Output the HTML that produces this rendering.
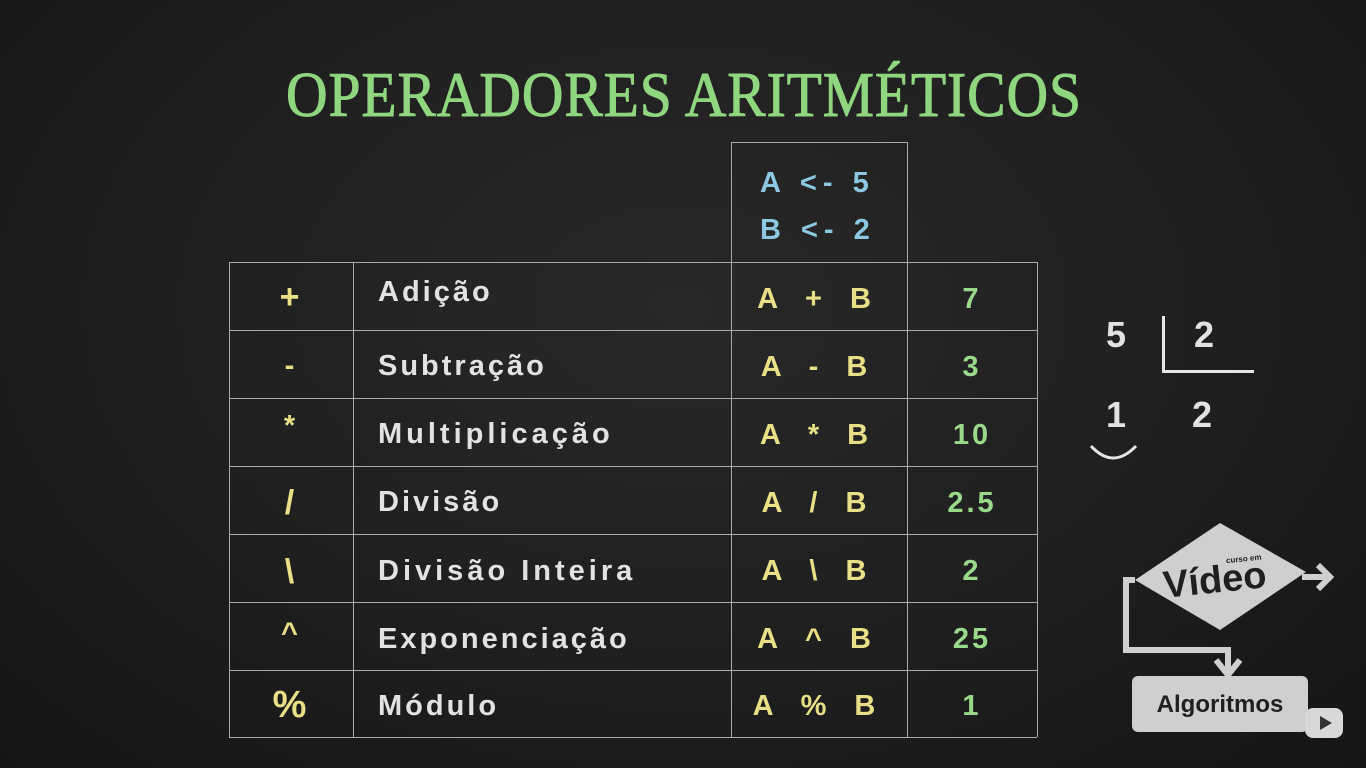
<!DOCTYPE html>
<html><head><meta charset="utf-8"><style>
body{margin:0;width:1366px;height:768px;overflow:hidden;background:radial-gradient(ellipse at 50% 40%,#272827 0%,#1e1f1e 55%,#141514 100%);font-family:"Liberation Sans","DejaVu Sans",sans-serif;position:relative}
.a{position:absolute}
.l{position:absolute;background:#a9a9a9}
.t{position:absolute;font-size:29px;font-weight:bold;letter-spacing:3px;white-space:nowrap}
.w{color:#e2e2e2}.y{color:#e8df86}.b{color:#8cc8e2}.g{color:#9ad98a}
.c{text-align:center}
</style></head><body>
<div class="a" style="left:286px;top:58px;font-family:'Liberation Serif',serif;font-size:64px;color:#8fd67f;letter-spacing:1px;transform:scaleX(0.9);transform-origin:left;white-space:nowrap;-webkit-text-stroke:1px #8fd67f">OPERADORES ARITMÉTICOS</div>
<div class="l" style="left:731px;top:142px;width:176px;height:1px"></div>
<div class="l" style="left:731px;top:142px;width:1px;height:595px"></div>
<div class="l" style="left:907px;top:142px;width:1px;height:595px"></div>
<div class="t b" style="left:760px;top:167px;letter-spacing:6px">A &lt;- 5</div>
<div class="t b" style="left:760px;top:214px;letter-spacing:6px">B &lt;- 2</div>
<div class="l" style="left:229px;top:262px;width:808px;height:1px"></div>
<div class="l" style="left:229px;top:330px;width:808px;height:1px"></div>
<div class="l" style="left:229px;top:398px;width:808px;height:1px"></div>
<div class="l" style="left:229px;top:466px;width:808px;height:1px"></div>
<div class="l" style="left:229px;top:534px;width:808px;height:1px"></div>
<div class="l" style="left:229px;top:602px;width:808px;height:1px"></div>
<div class="l" style="left:229px;top:670px;width:808px;height:1px"></div>
<div class="l" style="left:229px;top:737px;width:808px;height:1px"></div>
<div class="l" style="left:229px;top:262px;width:1px;height:475px"></div>
<div class="l" style="left:353px;top:262px;width:1px;height:475px"></div>
<div class="l" style="left:1037px;top:262px;width:1px;height:475px"></div>

<div class="t y c" style="left:229px;width:124px;top:278px;font-size:34px">+</div>
<div class="t w" style="left:378px;top:276px">Adição</div>
<div class="t y c" style="left:731px;width:176px;top:283px;letter-spacing:10px">A + B</div>
<div class="t g c" style="left:907px;width:130px;top:283px">7</div>

<div class="t y c" style="left:229px;width:124px;top:350px">-</div>
<div class="t w" style="left:378px;top:350px">Subtração</div>
<div class="t y c" style="left:731px;width:176px;top:351px;letter-spacing:10px">A - B</div>
<div class="t g c" style="left:907px;width:130px;top:351px">3</div>

<div class="t y c" style="left:229px;width:124px;top:410px">*</div>
<div class="t w" style="left:378px;top:418px;letter-spacing:4px">Multiplicação</div>
<div class="t y c" style="left:731px;width:176px;top:419px;letter-spacing:10px">A * B</div>
<div class="t g c" style="left:907px;width:130px;top:419px">10</div>

<div class="t y c" style="left:229px;width:124px;top:484px;font-size:34px">/</div>
<div class="t w" style="left:378px;top:486px">Divisão</div>
<div class="t y c" style="left:731px;width:176px;top:487px;letter-spacing:10px">A / B</div>
<div class="t g c" style="left:907px;width:130px;top:487px">2.5</div>

<div class="t y c" style="left:229px;width:124px;top:553px;font-size:34px">\</div>
<div class="t w" style="left:378px;top:555px;letter-spacing:4px">Divisão Inteira</div>
<div class="t y c" style="left:731px;width:176px;top:555px;letter-spacing:10px">A \ B</div>
<div class="t g c" style="left:907px;width:130px;top:555px">2</div>

<div class="t y c" style="left:229px;width:124px;top:617px">^</div>
<div class="t w" style="left:378px;top:623px">Exponenciação</div>
<div class="t y c" style="left:731px;width:176px;top:623px;letter-spacing:10px">A ^ B</div>
<div class="t g c" style="left:907px;width:130px;top:623px">25</div>

<div class="t y c" style="left:229px;width:124px;top:684px;font-size:38px">%</div>
<div class="t w" style="left:378px;top:690px">Módulo</div>
<div class="t y c" style="left:731px;width:176px;top:690px;letter-spacing:10px">A % B</div>
<div class="t g c" style="left:907px;width:130px;top:690px">1</div>

<div class="t w" style="left:1106px;top:314px;font-size:36px">5</div>
<div class="t w" style="left:1194px;top:314px;font-size:36px">2</div>
<div class="t w" style="left:1106px;top:394px;font-size:36px">1</div>
<div class="t w" style="left:1192px;top:394px;font-size:36px">2</div>
<div class="a" style="left:1162px;top:316px;width:3px;height:56px;background:#e6e6e6"></div>
<div class="a" style="left:1162px;top:370px;width:92px;height:3px;background:#e6e6e6"></div>
<svg class="a" style="left:1086px;top:440px" width="60" height="30"><path d="M5 6 Q27 30 50 6" stroke="#e6e6e6" stroke-width="3" fill="none"/></svg>

<svg class="a" style="left:1110px;top:520px" width="256" height="248">
<polygon points="110,3 196,52 110,110 25,60" fill="#cfcfcf"/>
<path d="M25,60 H16 V130 H118 V150" stroke="#cfcfcf" stroke-width="6" fill="none"/>
<path d="M106,140 L118,155 L130,140" stroke="#cfcfcf" stroke-width="6" fill="none"/>
<path d="M192,57 H218 M208,45 L220,57 L208,69" stroke="#cfcfcf" stroke-width="6" fill="none"/>
<rect x="22" y="156" width="176" height="56" rx="6" fill="#cfcfcf"/>
<text x="110" y="192" text-anchor="middle" font-family="Liberation Sans" font-weight="bold" font-size="24" fill="#1f1f1f">Algoritmos</text>
<text x="118" y="44" font-family="Liberation Sans" font-weight="bold" font-size="8" fill="#1f1f1f" transform="rotate(-6 110 60)">curso em</text>
<text x="53" y="72" font-family="Liberation Sans" font-weight="bold" font-size="38" fill="#1f1f1f" transform="rotate(-6 110 60)">Vídeo</text>
<rect x="195" y="188" width="38" height="30" rx="8" fill="#d8d8d8"/>
<polygon points="210,196 210,210 222,203" fill="#333"/>
</svg>
</body></html>
